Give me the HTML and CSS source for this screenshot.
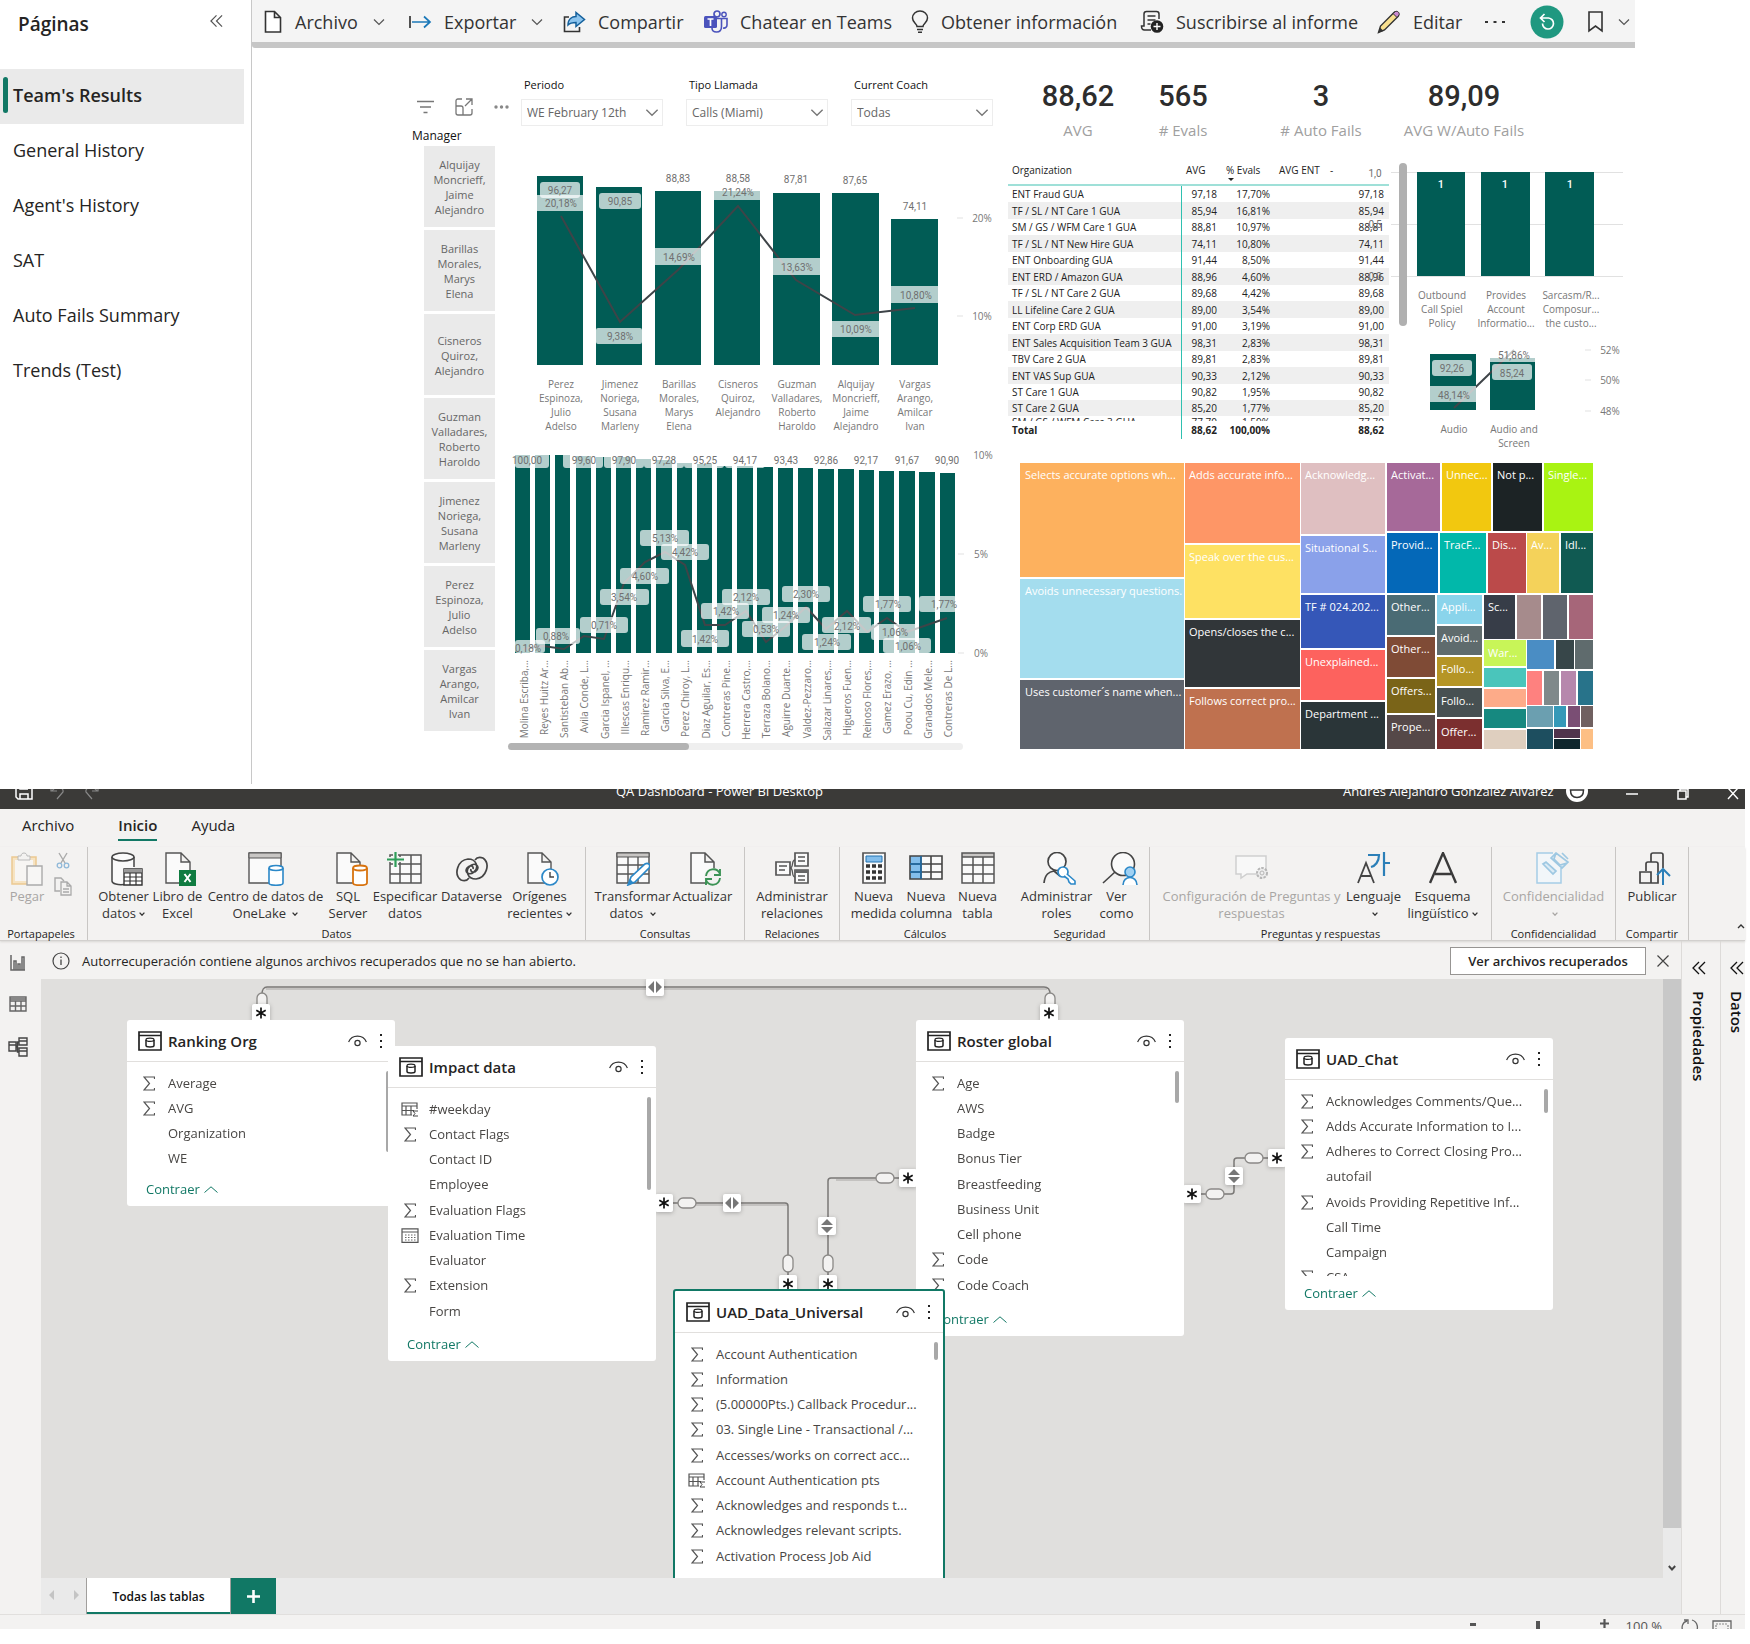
FILE: index.html
```html
<!DOCTYPE html>
<html lang="es">
<head>
<meta charset="utf-8">
<meta name="viewport" content="width=device-width, initial-scale=1">
<title>QA Dashboard - Power BI</title>
<link rel="stylesheet" href="styles.css">
</head>
<body>
<svg class="defs" aria-hidden="true">
  <symbol id="chev" viewBox="0 0 12 8"><path d="M1 1.500l5 5 5-5" fill="none" stroke="currentColor" stroke-width="1.200"/></symbol>
  <symbol id="ddown" viewBox="0 0 6 4"><path d="M.6.6L3 3.200 5.400.6" fill="none" stroke="currentColor" stroke-width="1.300"/></symbol>
  <symbol id="dchev" viewBox="0 0 14 14"><path d="M7 1L1 7l6 6M13 1L7 7l6 6" fill="none" stroke="currentColor" stroke-width="1.300"/></symbol>
  <symbol id="sigma" viewBox="0 0 12 15"><path d="M11.500 3V1H1l5.500 6.500L1 14h10.500v-2" fill="none" stroke="#555" stroke-width="1.200"/></symbol>
  <symbol id="calc" viewBox="0 0 18 15"><path d="M16 7V1H1v12h10M1 4h15M5 4v9M10 4v9M1 8.500h12" fill="none" stroke="#555" stroke-width="1.200"/><path d="M17 9h-5l2 2.500-2 2.500h5" fill="none" stroke="#444"/></symbol>
  <symbol id="cal" viewBox="0 0 18 15"><path d="M1 .8h16v13.500H1zM1 4h16" fill="none" stroke="#555" stroke-width="1.200"/><path d="M4 7h10.500M4 9.500h10.500M4 12h10.500" stroke="#666" stroke-width="1.200" stroke-dasharray="1.500 1.500"/></symbol>
  <symbol id="tbl" viewBox="0 0 24 20"><path d="M1 1h22v18H1zM1 4.500h22" fill="none" stroke="#222" stroke-width="1.700"/><path d="M8 9v5.500c0 2 8 2 8 0V9" fill="none" stroke="#222" stroke-width="1.500"/><ellipse cx="12" cy="8.800" rx="4" ry="1.600" fill="none" stroke="#222" stroke-width="1.300"/></symbol>
  <symbol id="eye" viewBox="0 0 19 12"><path d="M.6 7C4-.8 15-.8 18.400 7" fill="none" stroke="#333" stroke-width="1.200"/><circle cx="9.500" cy="8" r="2.600" fill="none" stroke="#333" stroke-width="1.200"/></symbol>
  <symbol id="kebab" viewBox="0 0 4 16"><path d="M1 1h2v2H1zM1 7h2v2H1zM1 13h2v2H1z" fill="#222"/></symbol>
  <symbol id="up" viewBox="0 0 14 7"><path d="M.5 6.500L7 .8l6.500 5.700" fill="none" stroke="#117865"/></symbol>
  <symbol id="star" viewBox="0 0 18 18"><rect width="18" height="18" rx="2" fill="#fff"/><path d="M9 3.500v11M4.300 6.200l9.400 5.600M13.700 6.200l-9.400 5.600" stroke="#111" stroke-width="1.700"/></symbol>
  <symbol id="lr" viewBox="0 0 18 18"><rect width="18" height="18" rx="2" fill="#fff"/><path d="M8 3v12L2 9zM10 3v12l6-6z" fill="#777"/></symbol>
  <symbol id="ud" viewBox="0 0 18 18"><rect width="18" height="18" rx="2" fill="#fff"/><path d="M3 8h12L9 2zM3 10h12l-6 6z" fill="#777"/></symbol>
</svg>

<section class="service">
  <nav class="pages" aria-label="Páginas">
    <div class="pages-head"><h2>Páginas</h2><button class="bare" aria-label="Contraer"><svg width="13" height="14"><use href="#dchev"/></svg></button></div>
    <a class="page active" href="#">Team's Results</a>
    <a class="page" href="#">General History</a>
    <a class="page" href="#">Agent's History</a>
    <a class="page" href="#">SAT</a>
    <a class="page" href="#">Auto Fails Summary</a>
    <a class="page" href="#">Trends (Test)</a>
  </nav>

  <div class="report">
    <div class="toolbar">
      <button><svg width="19" height="24" viewBox="0 0 19 24"><path d="M1.500 1.500h9l6 6V22h-15zM10.500 1.500v6h6" fill="#fff" stroke="#333" stroke-width="1.600"/></svg><span>Archivo</span><svg class="caret" width="12" height="8"><use href="#chev"/></svg></button>
      <button><svg width="23" height="16" viewBox="0 0 23 16"><path d="M1 2v12" stroke="#333" stroke-width="1.700"/><path d="M3 8h18M15 2.500L21 8l-6 5.500" fill="none" stroke="#1b78b8" stroke-width="1.700"/></svg><span>Exportar</span><svg class="caret" width="12" height="8"><use href="#chev"/></svg></button>
      <button><svg width="23" height="22" viewBox="0 0 23 22"><path d="M6 6H1.500v14.500h15V16" fill="none" stroke="#333" stroke-width="1.600"/><path d="M5 14c0-6 4-8.500 8-8.500V1.500l8.500 7-8.500 7v-4c-4 0-6 .5-8 2.500z" fill="#8cc4ee" stroke="#14609c" stroke-width="1.500"/></svg><span>Compartir</span></button>
      <button><svg width="24" height="24" viewBox="0 0 24 24"><circle cx="13" cy="4" r="3" fill="none" stroke="#4b53bc" stroke-width="1.700"/><circle cx="20" cy="4.500" r="2.200" fill="none" stroke="#4b53bc" stroke-width="1.400"/><path d="M17 8.500h6v6.500c0 2-1.500 3.500-4 3M9 8.500h8.500v8c0 3.500-2 5.500-5 5.500S8 20.500 8 18" fill="none" stroke="#4b53bc" stroke-width="1.600"/><rect y="6" width="13" height="12" rx="1.500" fill="#4b53bc"/><path d="M3.500 9h6M6.500 9v7" stroke="#fff" stroke-width="1.700"/></svg><span>Chatear en Teams</span></button>
      <button><svg width="18" height="24" viewBox="0 0 18 24"><path d="M6 16.500c0-3-4.500-4-4.500-8.500a7.500 7 0 0 1 15 0c0 4.500-4.500 5.500-4.500 8.500zM6 19.500h6M7 22.300h4" fill="none" stroke="#333" stroke-width="1.500"/></svg><span>Obtener información</span></button>
      <button><svg width="24" height="24" viewBox="0 0 24 24"><path d="M19 9V4c0-1.500-1-2.500-2.500-2.500h-10C5 1.500 4 2.500 4 4v12H1.500c0 3 1 4 3 4H11M7.500 6h8M7.500 10h8M7.500 14h3" fill="none" stroke="#333" stroke-width="1.500"/><circle cx="17" cy="16.500" r="6.300" fill="#222"/><path d="M17 13v7M13.500 16.500h7" stroke="#fff" stroke-width="1.400"/></svg><span>Suscribirse al informe</span></button>
      <button><svg width="24" height="24" viewBox="0 0 24 24"><path d="M1.500 22.500L3.500 16 17 2.500c2-2 6 1.500 4 4L7.500 20z" fill="#f8df8e" stroke="#333" stroke-width="1.400"/><path d="M16 3.500L18.500 1.500c2-1 4.500 1.500 3.500 3.500L20 7.500z" fill="#c989cf" stroke="#333"/><path d="M1.500 22.500l1.500-5 3.500 3.500z" fill="#333"/></svg><span>Editar</span></button>
      <button aria-label="Más"><svg width="20" height="4" viewBox="0 0 20 4"><path d="M0 1h3v2H0zM8.500 1h3v2h-3zM17 1h3v2h-3z" fill="#333"/></svg></button>
      <button aria-label="Restablecer"><svg width="34" height="34" viewBox="0 0 34 34"><circle cx="17" cy="17" r="16.500" fill="#1f9880"/><path d="M11 13h7.500a5.500 5.500 0 1 1-6 5.500M14.500 9l-4 4 4 4" fill="none" stroke="#fff" stroke-width="1.700"/></svg></button>
      <button aria-label="Marcadores"><svg width="15" height="22" viewBox="0 0 15 22"><path d="M1 1h13v19l-6.500-5L1 20z" fill="none" stroke="#333" stroke-width="1.600"/></svg><svg class="caret" width="12" height="8"><use href="#chev"/></svg></button>
    </div>

    <div class="board">
      <div class="managers">
        <div class="visual-tools">
          <svg width="17" height="14" viewBox="0 0 17 14"><path d="M0 1.500h17M3 7h11M6.500 12.500h4" stroke="#777" stroke-width="1.500"/></svg>
          <svg width="18" height="18" viewBox="0 0 18 18"><path d="M7 1H3C1.500 1 1 2 1 3v12c0 1.500 1 2 2 2h12c1.500 0 2-1 2-2v-4M1 8h5c1.500 0 2 .7 2 2v7M11 1h6v6M17 1l-7 7" fill="none" stroke="#777" stroke-width="1.300"/></svg>
          <svg width="15" height="4" viewBox="0 0 15 4"><circle cx="2" cy="2" r="1.700" fill="#888"/><circle cx="7.500" cy="2" r="1.700" fill="#888"/><circle cx="13" cy="2" r="1.700" fill="#888"/></svg>
        </div>
        <h3>Manager</h3>
        <button>Alquijay<br>Moncrieff,<br>Jaime<br>Alejandro</button>
        <button>Barillas<br>Morales,<br>Marys<br>Elena</button>
        <button>Cisneros<br>Quiroz,<br>Alejandro</button>
        <button>Guzman<br>Valladares,<br>Roberto<br>Haroldo</button>
        <button>Jimenez<br>Noriega,<br>Susana<br>Marleny</button>
        <button>Perez<br>Espinoza,<br>Julio<br>Adelso</button>
        <button>Vargas<br>Arango,<br>Amilcar<br>Ivan</button>
      </div>

      <div class="middle">
        <div class="filters">
          <div class="filter"><label for="f1">Periodo</label><div class="pick"><select id="f1"><option>WE February 12th</option></select><svg width="14" height="9"><use href="#chev"/></svg></div></div>
          <div class="filter"><label for="f2">Tipo Llamada</label><div class="pick"><select id="f2"><option>Calls (Miami)</option></select><svg width="14" height="9"><use href="#chev"/></svg></div></div>
          <div class="filter"><label for="f3">Current Coach</label><div class="pick"><select id="f3"><option>Todas</option></select><svg width="14" height="9"><use href="#chev"/></svg></div></div>
        </div>
        <svg class="chart" width="496" height="270" viewBox="508 164 496 270">
          <g class="bar"><rect x="537" y="176" width="46" height="189"/><rect x="596" y="187" width="46" height="178"/><rect x="655" y="191" width="46" height="174"/><rect x="714" y="191" width="46" height="174"/><rect x="773" y="193" width="47" height="172"/><rect x="832" y="193" width="47" height="172"/><rect x="891" y="219" width="47" height="146"/></g>
          <polyline class="trend" points="561,216 620,322 679,269 738,206 796,280 855,315 915,308"/>
          <g class="veil"><rect x="540" y="182" width="40" height="16" rx="3"/><rect x="537" y="195" width="46" height="16"/><rect x="599" y="193" width="42" height="16" rx="3"/><rect x="596" y="328" width="46" height="16" rx="2"/><rect x="655" y="248" width="47" height="17"/><rect x="714" y="184" width="46" height="16"/><rect x="773" y="258" width="47" height="17"/><rect x="832" y="321" width="47" height="16"/><rect x="891" y="286" width="47" height="17"/></g>
          <g class="num"><text x="560" y="190">96,27</text><text x="561" y="203">20,18%</text><text x="620" y="201">90,85</text><text x="620" y="336">9,38%</text><text x="678" y="178">88,83</text><text x="679" y="257">14,69%</text><text x="738" y="178">88,58</text><text x="738" y="192">21,24%</text><text x="796" y="179">87,81</text><text x="797" y="267">13,63%</text><text x="855" y="180">87,65</text><text x="856" y="329">10,09%</text><text x="915" y="206">74,11</text><text x="916" y="295">10,80%</text></g>
          <path class="tick" d="M957 218h6M957 316h6"/>
          <g class="cat"><text x="982" y="218">20%</text><text x="982" y="316">10%</text>
            <text x="561" y="384">Perez</text><text x="561" y="398">Espinoza,</text><text x="561" y="412">Julio</text><text x="561" y="426">Adelso</text>
            <text x="620" y="384">Jimenez</text><text x="620" y="398">Noriega,</text><text x="620" y="412">Susana</text><text x="620" y="426">Marleny</text>
            <text x="679" y="384">Barillas</text><text x="679" y="398">Morales,</text><text x="679" y="412">Marys</text><text x="679" y="426">Elena</text>
            <text x="738" y="384">Cisneros</text><text x="738" y="398">Quiroz,</text><text x="738" y="412">Alejandro</text>
            <text x="797" y="384">Guzman</text><text x="797" y="398">Valladares,</text><text x="797" y="412">Roberto</text><text x="797" y="426">Haroldo</text>
            <text x="856" y="384">Alquijay</text><text x="856" y="398">Moncrieff,</text><text x="856" y="412">Jaime</text><text x="856" y="426">Alejandro</text>
            <text x="915" y="384">Vargas</text><text x="915" y="398">Arango,</text><text x="915" y="412">Amilcar</text><text x="915" y="426">Ivan</text></g>
        </svg>
        <svg class="chart" width="496" height="309" viewBox="508 434 496 309">
          <g class="bar"><rect x="515" y="455" width="15" height="198"/><rect x="535" y="455" width="15" height="198"/><rect x="555" y="455" width="15" height="198"/><rect x="576" y="456" width="15" height="197"/><rect x="596" y="457" width="15" height="196"/><rect x="616" y="457" width="15" height="196"/><rect x="636" y="459" width="15" height="194"/><rect x="656" y="460" width="16" height="193"/><rect x="677" y="463" width="15" height="190"/><rect x="697" y="464" width="15" height="189"/><rect x="717" y="466" width="15" height="187"/><rect x="737" y="466" width="16" height="187"/><rect x="757" y="467" width="16" height="186"/><rect x="778" y="468" width="15" height="185"/><rect x="798" y="468" width="15" height="185"/><rect x="818" y="469" width="16" height="184"/><rect x="838" y="469" width="16" height="184"/><rect x="859" y="470" width="15" height="183"/><rect x="879" y="471" width="15" height="182"/><rect x="899" y="471" width="16" height="182"/><rect x="919" y="472" width="16" height="181"/><rect x="940" y="473" width="15" height="180"/></g>
          <polyline class="trend" points="523,649 543,646 564,649 584,636 604,639 624,583 645,562 665,552 685,565 705,625 725,625 746,611 766,642 786,626 806,607 826,629 847,611 867,632 887,618 907,632 927,625 947,618"/>
          <g class="veil"><rect x="515" y="452" width="34" height="16" rx="3"/><rect x="563" y="452" width="40" height="16" rx="3"/><rect x="604" y="452" width="40" height="16" rx="3"/><rect x="644" y="452" width="40" height="16" rx="3"/><rect x="684" y="452" width="40" height="16" rx="3"/><rect x="725" y="452" width="40" height="16" rx="3"/>
          <rect x="515" y="640" width="30" height="13" rx="3"/><rect x="536" y="628" width="44" height="16" rx="3"/><rect x="580" y="617" width="48" height="16" rx="3"/><rect x="600" y="589" width="49" height="16" rx="3"/><rect x="620" y="568" width="49" height="16" rx="3"/><rect x="640" y="530" width="49" height="16" rx="3"/><rect x="661" y="544" width="48" height="16" rx="3"/><rect x="681" y="630" width="48" height="17" rx="3"/><rect x="701" y="603" width="48" height="16" rx="3"/><rect x="722" y="589" width="48" height="16" rx="3"/><rect x="742" y="621" width="48" height="16" rx="3"/><rect x="762" y="607" width="48" height="16" rx="3"/><rect x="782" y="586" width="48" height="16" rx="3"/><rect x="802" y="634" width="49" height="16" rx="3"/><rect x="822" y="617" width="49" height="16" rx="3"/><rect x="863" y="596" width="48" height="16" rx="3"/><rect x="871" y="624" width="48" height="16" rx="3"/><rect x="883" y="638" width="48" height="15" rx="3"/><rect x="919" y="596" width="38" height="16" rx="3"/></g>
          <g class="num"><text x="527" y="460">100,00</text><text x="584" y="460">99,60</text><text x="624" y="460">97,90</text><text x="664" y="460">97,28</text><text x="705" y="460">95,25</text><text x="745" y="460">94,17</text><text x="786" y="460">93,43</text><text x="826" y="460">92,86</text><text x="866" y="460">92,17</text><text x="907" y="460">91,67</text><text x="947" y="460">90,90</text>
          <text x="528" y="648">0,18%</text><text x="556" y="636">0,88%</text><text x="604" y="625">0,71%</text><text x="624" y="597">3,54%</text><text x="645" y="576">4,60%</text><text x="665" y="538">5,13%</text><text x="685" y="552">4,42%</text><text x="705" y="639">1,42%</text><text x="726" y="611">1,42%</text><text x="746" y="597">2,12%</text><text x="766" y="629">0,53%</text><text x="786" y="615">1,24%</text><text x="806" y="594">2,30%</text><text x="827" y="642">1,24%</text><text x="847" y="626">2,12%</text><text x="888" y="604">1,77%</text><text x="895" y="632">1,06%</text><text x="908" y="646">1,06%</text><text x="944" y="604">1,77%</text></g>
          <path class="tick" d="M958 554h6M958 653h6"/>
          <g class="cat"><text x="983" y="455">10%</text><text x="981" y="554">5%</text><text x="981" y="653">0%</text></g>
          <g class="cat side"><text transform="translate(524 660) rotate(-90)">Molina Escriba,...</text><text transform="translate(544 660) rotate(-90)">Reyes Huitz Ar...</text><text transform="translate(564 660) rotate(-90)">Santisteban Ab...</text><text transform="translate(584 660) rotate(-90)">Avila Conde, L...</text><text transform="translate(605 660) rotate(-90)">Garcia Ispanel, ...</text><text transform="translate(625 660) rotate(-90)">Illescas Enriqu...</text><text transform="translate(645 660) rotate(-90)">Ramirez Ramir...</text><text transform="translate(665 660) rotate(-90)">Garcia Silva, E...</text><text transform="translate(685 660) rotate(-90)">Perez Chiroy, L...</text><text transform="translate(706 660) rotate(-90)">Diaz Aguilar, Es...</text><text transform="translate(726 660) rotate(-90)">Contreras Pine...</text><text transform="translate(746 660) rotate(-90)">Herrera Castro,...</text><text transform="translate(766 660) rotate(-90)">Terraza Bolano...</text><text transform="translate(786 660) rotate(-90)">Aguirre Duarte...</text><text transform="translate(807 660) rotate(-90)">Valdez-Pezzaro...</text><text transform="translate(827 660) rotate(-90)">Salazar Linares,...</text><text transform="translate(847 660) rotate(-90)">Higueros Fuen...</text><text transform="translate(867 660) rotate(-90)">Reinoso Flores,...</text><text transform="translate(887 660) rotate(-90)">Gamez Erazo, ...</text><text transform="translate(908 660) rotate(-90)">Poou Cu, Edin ...</text><text transform="translate(928 660) rotate(-90)">Granados Mele...</text><text transform="translate(948 660) rotate(-90)">Contreras De L...</text></g>
        </svg>
        <div class="hscroll"><div class="hthumb"></div></div>
      </div>

      <div class="right">
        <div class="kpis">
          <div><b>88,62</b><span>AVG</span></div>
          <div><b>565</b><span># Evals</span></div>
          <div><b>3</b><span># Auto Fails</span></div>
          <div><b>89,09</b><span>AVG W/Auto Fails</span></div>
        </div>
        <div class="detail">
          <div class="org">
            <table>
              <colgroup><col class="c1"><col class="c2"><col class="c3"><col class="c4"><col class="c5"></colgroup>
              <thead><tr><th>Organization</th><th>AVG</th><th class="sorted">% Evals</th><th>AVG ENT</th><th>-</th></tr></thead>
              <tbody>
                <tr><td>ENT Fraud GUA</td><td>97,18</td><td>17,70%</td><td></td><td>97,18</td></tr>
                <tr><td>TF / SL / NT Care 1 GUA</td><td>85,94</td><td>16,81%</td><td></td><td>85,94</td></tr>
                <tr><td>SM / GS / WFM Care 1 GUA</td><td>88,81</td><td>10,97%</td><td></td><td>88,81</td></tr>
                <tr><td>TF / SL / NT New Hire GUA</td><td>74,11</td><td>10,80%</td><td></td><td>74,11</td></tr>
                <tr><td>ENT Onboarding GUA</td><td>91,44</td><td>8,50%</td><td></td><td>91,44</td></tr>
                <tr><td>ENT ERD / Amazon GUA</td><td>88,96</td><td>4,60%</td><td></td><td>88,96</td></tr>
                <tr><td>TF / SL / NT Care 2 GUA</td><td>89,68</td><td>4,42%</td><td></td><td>89,68</td></tr>
                <tr><td>LL Lifeline Care 2 GUA</td><td>89,00</td><td>3,54%</td><td></td><td>89,00</td></tr>
                <tr><td>ENT Corp ERD GUA</td><td>91,00</td><td>3,19%</td><td></td><td>91,00</td></tr>
                <tr><td>ENT Sales Acquisition Team 3 GUA</td><td>98,31</td><td>2,83%</td><td></td><td>98,31</td></tr>
                <tr><td>TBV Care 2 GUA</td><td>89,81</td><td>2,83%</td><td></td><td>89,81</td></tr>
                <tr><td>ENT VAS Sup GUA</td><td>90,33</td><td>2,12%</td><td></td><td>90,33</td></tr>
                <tr><td>ST Care 1 GUA</td><td>90,82</td><td>1,95%</td><td></td><td>90,82</td></tr>
                <tr><td>ST Care 2 GUA</td><td>85,20</td><td>1,77%</td><td></td><td>85,20</td></tr>
                <tr class="cut"><td><div>SM / GS / WFM Care 3 GUA</div></td><td><div>77,70</div></td><td><div>1,59%</div></td><td></td><td><div>77,70</div></td></tr>
              </tbody>
              <tfoot><tr><td>Total</td><td>88,62</td><td>100,00%</td><td></td><td>88,62</td></tr></tfoot>
            </table>
          </div>
          <svg class="chart fails" width="268" height="295" viewBox="1362 160 268 295">
            <path class="grid" d="M1391 172.500h232M1391 224.500h232M1391 276.500h232"/>
            <rect x="1399" y="163" width="8" height="163" rx="4" fill="#b0b0b0"/>
            <g class="bar"><rect x="1417" y="172" width="48" height="104"/><rect x="1481" y="172" width="49" height="104"/><rect x="1545" y="172" width="49" height="104"/>
            <rect x="1430" y="354" width="46" height="56"/><rect x="1490" y="358" width="45" height="52"/></g>
            <g class="one"><text x="1441" y="184">1</text><text x="1505" y="184">1</text><text x="1570" y="184">1</text></g>
            <polyline class="trend" points="1454,408 1514,350"/>
            <g class="veil"><rect x="1432" y="360" width="40" height="16" rx="3"/><rect x="1430" y="386" width="46" height="16"/><rect x="1490" y="346" width="45" height="16"/><rect x="1492" y="364" width="40" height="16" rx="3"/></g>
            <g class="num"><text x="1375" y="173">1,0</text><text x="1375" y="224">0,5</text><text x="1375" y="276">0,0</text><text x="1452" y="368">92,26</text><text x="1454" y="395">48,14%</text><text x="1514" y="355">51,86%</text><text x="1512" y="373">85,24</text></g>
            <path class="tick" d="M1585 350h6M1585 380h6M1585 411h6"/>
            <g class="cat"><text x="1442" y="295">Outbound</text><text x="1442" y="309">Call Spiel</text><text x="1442" y="323">Policy</text><text x="1506" y="295">Provides</text><text x="1506" y="309">Account</text><text x="1506" y="323">Informatio...</text><text x="1571" y="295">Sarcasm/R...</text><text x="1571" y="309">Composur...</text><text x="1571" y="323">the custo...</text>
            <text x="1610" y="350">52%</text><text x="1610" y="380">50%</text><text x="1610" y="411">48%</text><text x="1454" y="429">Audio</text><text x="1514" y="429">Audio and</text><text x="1514" y="443">Screen</text></g>
          </svg>
        </div>
        <svg class="treemap" width="574" height="288" viewBox="0 0 574 288">
          <g>
          <rect x="0" y="1" width="164" height="114" fill="#fdb15e"/><rect x="0" y="117" width="164" height="99" fill="#a4ddee"/><rect x="0" y="218" width="164" height="69" fill="#5f646d"/>
          <rect x="165" y="1" width="115" height="80" fill="#fe9666"/><rect x="165" y="83" width="115" height="73" fill="#fee163"/><rect x="165" y="158" width="115" height="67" fill="#313639"/><rect x="165" y="227" width="115" height="60" fill="#bf714f"/>
          <rect x="281" y="1" width="84" height="71" fill="#dfbfc1"/><rect x="281" y="74" width="84" height="57" fill="#8aa1ea"/><rect x="281" y="133" width="84" height="53" fill="#3557b8"/><rect x="281" y="188" width="84" height="50" fill="#fd625e"/><rect x="281" y="240" width="84" height="47" fill="#2a3538"/>
          <rect x="367" y="1" width="53" height="68" fill="#a66999"/><rect x="422" y="1" width="49" height="68" fill="#f2c80f"/><rect x="473" y="1" width="49" height="68" fill="#1c2325"/><rect x="524" y="1" width="49" height="68" fill="#a9f312"/>
          <rect x="367" y="71" width="51" height="60" fill="#0468b8"/><rect x="420" y="71" width="46" height="60" fill="#01b8aa"/><rect x="468" y="71" width="38" height="60" fill="#bb4a4a"/><rect x="507" y="71" width="32" height="60" fill="#f4d25a"/><rect x="541" y="71" width="32" height="60" fill="#105a52"/>
          <rect x="367" y="133" width="48" height="40" fill="#4a6b74"/><rect x="367" y="175" width="48" height="40" fill="#7f4b36"/><rect x="367" y="217" width="48" height="34" fill="#7a6418"/><rect x="367" y="253" width="48" height="34" fill="#554848"/>
          <rect x="417" y="133" width="45" height="29" fill="#8ad4eb"/><rect x="417" y="164" width="45" height="29" fill="#5f6b6d"/><rect x="417" y="195" width="45" height="29" fill="#b59525"/><rect x="417" y="226" width="45" height="29" fill="#475052"/><rect x="417" y="257" width="45" height="30" fill="#7b2f2f"/>
          <rect x="464" y="133" width="31" height="44" fill="#373d48"/><rect x="497" y="133" width="24" height="44" fill="#a68b8c"/><rect x="523" y="133" width="24" height="44" fill="#5f646d"/><rect x="549" y="133" width="24" height="44" fill="#a66679"/>
          <rect x="464" y="178" width="42" height="26" fill="#c8f558"/><rect x="464" y="206" width="42" height="19" fill="#4ac5bb"/><rect x="464" y="227" width="42" height="18" fill="#fdab89"/><rect x="464" y="247" width="42" height="19" fill="#168980"/><rect x="464" y="268" width="42" height="19" fill="#dfcfbf"/>
          <rect x="507" y="178" width="27" height="29" fill="#4a8dc4"/><rect x="536" y="178" width="18" height="29" fill="#374649"/><rect x="555" y="178" width="18" height="29" fill="#5f6b6d"/>
          <rect x="507" y="209" width="15" height="34" fill="#fe817f"/><rect x="524" y="209" width="15" height="34" fill="#7f898a"/><rect x="541" y="209" width="15" height="34" fill="#b687ac"/><rect x="558" y="209" width="15" height="34" fill="#28738a"/>
          <rect x="507" y="244" width="26" height="21" fill="#6b9fb0"/><rect x="534" y="244" width="12" height="21" fill="#3599b8"/><rect x="548" y="244" width="12" height="21" fill="#7a4e74"/><rect x="561" y="244" width="12" height="21" fill="#706060"/>
          <rect x="507" y="267" width="26" height="20" fill="#1d4e5f"/><rect x="534" y="267" width="26" height="9" fill="#4f334c"/><rect x="534" y="277" width="26" height="10" fill="#0f262d"/><rect x="561" y="267" width="12" height="20" fill="#fdbf84"/>
          </g>
          <g class="tl"><text x="5" y="12">Selects accurate options wh...</text><text x="5" y="128">Avoids unnecessary questions.</text><text x="5" y="229">Uses customer´s name when...</text>
          <text x="169" y="12">Adds accurate info...</text><text x="169" y="94">Speak over the cus...</text><text x="169" y="169">Opens/closes the c...</text><text x="169" y="238">Follows correct pro...</text>
          <text x="285" y="12">Acknowledg...</text><text x="285" y="85">Situational S...</text><text x="285" y="144">TF # 024.202...</text><text x="285" y="199">Unexplained...</text><text x="285" y="251">Department ...</text>
          <text x="371" y="12">Activat...</text><text x="426" y="12">Unnec...</text><text x="477" y="12">Not p...</text><text x="528" y="12">Single...</text>
          <text x="371" y="82">Provid...</text><text x="424" y="82">TracF...</text><text x="472" y="82">Dis...</text><text x="511" y="82">Av...</text><text x="545" y="82">Idl...</text>
          <text x="371" y="144">Other...</text><text x="371" y="186">Other...</text><text x="371" y="228">Offers...</text><text x="371" y="264">Prope...</text>
          <text x="421" y="144">Appli...</text><text x="421" y="175">Avoid...</text><text x="421" y="206">Follo...</text><text x="421" y="238">Follo...</text><text x="421" y="269">Offer...</text><text x="468" y="144">Sc...</text><text x="468" y="190">War...</text></g>
        </svg>
      </div>
    </div>
  </div>
</section>

<section class="desktop">
  <header class="titlebar">
    <div class="quick"><svg width="90" height="20" viewBox="0 0 90 20"><path d="M1 2h16v16H3l-2-2zM5 18v-5h8v5M5 2v6h8" fill="none" stroke="#fff" stroke-width="1.500"/><path d="M36 6v4h6M37 10c4-6 12-4 11 1l-6 7M83 6v4h-6M82 10c-4-6-12-4-11 1l6 7" fill="none" stroke="#888" stroke-width="1.200"/></svg></div>
    <div class="wtitle">QA Dashboard - Power BI Desktop</div>
    <div class="user">Andrés Alejandro González Álvarez</div>
    <svg class="avatar" width="24" height="22" viewBox="0 0 24 22"><circle cx="12" cy="10" r="11" fill="#fff"/><path d="M5.500 9h13c0 6-3 7.500-6.500 7.500S5.500 15 5.500 9z" fill="none" stroke="#333" stroke-width="1.500"/></svg>
    <svg class="winctl" width="114" height="18" viewBox="0 0 114 18"><path d="M1 10h12" stroke="#fff" stroke-width="1.500"/><path d="M53 7h8v8h-8zM55 7V5h8v8h-2" fill="none" stroke="#fff" stroke-width="1.500"/><path d="M103 4l10 11M113 4l-10 11" stroke="#fff" stroke-width="1.400"/></svg>
  </header>
  <nav class="tabs"><a href="#">Archivo</a><a href="#" class="on">Inicio</a><a href="#">Ayuda</a></nav>
  <div class="ribbon">
    <div class="group g-clip">
      <div class="cmds"><button class="off"><svg width="32" height="34" viewBox="0 0 32 34"><path d="M1 5h24v27H1z" fill="#f6e3c2" stroke="#ecc991" stroke-width="1.500"/><path d="M4 8h18v21H4z" fill="#f7f5f3"/><path d="M7 8V4h3c0-4 6-4 6 0h3v4z" fill="#f3f2f1" stroke="#bbb"/><path d="M16 14h15v19H16z" fill="#f7f6f5" stroke="#aaa" stroke-width="1.400"/></svg><span>Pegar</span></button>
      <div class="mini"><button aria-label="Cortar"><svg width="14" height="17" viewBox="0 0 14 17"><path d="M3 1l6 10M11 1L5 11" stroke="#aaa" stroke-width="1.400"/><circle cx="3.500" cy="13.500" r="2.300" fill="none" stroke="#8fb8d8" stroke-width="1.300"/><circle cx="10.500" cy="13.500" r="2.300" fill="none" stroke="#8fb8d8" stroke-width="1.300"/></svg></button><button aria-label="Copiar"><svg width="18" height="19" viewBox="0 0 18 19"><path d="M6 14H1V1h6l3 3" fill="none" stroke="#aaa" stroke-width="1.400"/><path d="M7 5h6l4 4v9H7zM13 5v4h4M9 12h6M9 15h6" fill="none" stroke="#aaa" stroke-width="1.300"/></svg></button></div></div>
      <div class="gname">Portapapeles</div>
    </div>
    <div class="group g-data">
      <div class="cmds">
        <button><svg class="lean" width="32" height="34" viewBox="0 0 32 34"><path d="M1 5v24c0 4 11 3 12 3V16h10V5z" fill="#fafafa" stroke="none"/><path d="M1 5v24c0 3 6 4 12 3.500M23 5v10" fill="none" stroke="#444" stroke-width="1.500"/><ellipse cx="12" cy="5" rx="11" ry="4" fill="#fafafa" stroke="#444" stroke-width="1.500"/><path d="M13 17h18v16H13z" fill="#fff" stroke="#333" stroke-width="1.400"/><path d="M13 17h18v4H13z" fill="#999"/><path d="M13 21h18M13 25h18M13 29h18M19 21v12M25 21v12" stroke="#333" stroke-width="1.200"/></svg><span>Obtener<br>datos<svg class="dd" width="6" height="4"><use href="#ddown"/></svg></span></button>
        <button><svg class="lean" width="32" height="34" viewBox="0 0 32 34"><path d="M1 1h15l9 9v21H1zM16 1v9h9" fill="#fafafa" stroke="#555" stroke-width="1.400"/><rect x="14" y="18" width="17" height="16" fill="#107c41"/><path d="M19.500 22l6 8M25.500 22l-6 8" stroke="#fff" stroke-width="2"/></svg><span>Libro de<br>Excel</span></button>
        <button><svg width="36" height="34" viewBox="0 0 36 34"><path d="M1 1h32v30H1z" fill="#fafafa" stroke="#555" stroke-width="1.400"/><path d="M1 1h32v5H1z" fill="#c8c6c4" stroke="#555"/><path d="M21 16v15c0 3 14 3 14 0V16" fill="#fff" stroke="#2b88c8" stroke-width="1.600"/><ellipse cx="28" cy="16" rx="7" ry="2.500" fill="#fff" stroke="#2b88c8" stroke-width="1.600"/></svg><span>Centro de datos de<br>OneLake <svg class="dd" width="6" height="4"><use href="#ddown"/></svg></span></button>
        <button><svg class="lean" width="32" height="34" viewBox="0 0 32 34"><path d="M1 1h14l9 9v21H1zM15 1v9h9" fill="#fafafa" stroke="#555" stroke-width="1.400"/><path d="M17 16v15c0 3 14 3 14 0V16" fill="#fff" stroke="#d8730f" stroke-width="1.800"/><ellipse cx="24" cy="16" rx="7" ry="2.500" fill="#fff" stroke="#d8730f" stroke-width="1.800"/></svg><span>SQL<br>Server</span></button>
        <button><svg width="36" height="34" viewBox="0 0 36 34"><path d="M3 3h31v28H3z" fill="#fafafa" stroke="#555" stroke-width="1.500"/><path d="M13 3v28M24 3v28M3 12h31M3 22h31" stroke="#555" stroke-width="1.500"/><path d="M0 7.500h17M8.500 0v15" stroke="#f3f2f1" stroke-width="5"/><path d="M0 7.500h17M8.500 0v15" stroke="#2f9e5a" stroke-width="2.200"/></svg><span>Especificar<br>datos</span></button>
        <button><svg width="34" height="34" viewBox="0 0 34 34"><path d="M28 6c8 6 3 20-7 21-9 0-11-9-6-13s10 0 7 4-7 2-6-1M6 28c-8-6-3-20 7-21 9 0 11 9 6 13s-10 0-7-4 7-2 6 1M28 6c-3-1-6-1-8 2M6 28c3 1 6 1 8-2" fill="none" stroke="#444" stroke-width="1.700"/></svg><span>Dataverse</span></button>
        <button><svg class="lean" width="32" height="34" viewBox="0 0 32 34"><path d="M1 1h14l9 9v21H1zM15 1v9h9" fill="#fafafa" stroke="#555" stroke-width="1.400"/><circle cx="23" cy="25" r="8" fill="#fff" stroke="#2b88c8" stroke-width="1.700"/><path d="M23 20v5h4" fill="none" stroke="#444" stroke-width="1.400"/></svg><span>Orígenes<br>recientes<svg class="dd" width="6" height="4"><use href="#ddown"/></svg></span></button>
      </div>
      <div class="gname">Datos</div>
    </div>
    <div class="group g-query">
      <div class="cmds">
        <button><svg width="34" height="34" viewBox="0 0 34 34"><path d="M1 1h32v30H1z" fill="#fafafa" stroke="#555" stroke-width="1.500"/><path d="M1 1h32v4H1z" fill="#c8c6c4" stroke="#555"/><path d="M12 5v26M22 5v26M1 13h32M1 22h32" stroke="#555" stroke-width="1.400"/><path d="M12 33l3-8 14-13c3-2 6 1 4 4L19 30z" fill="#fff" stroke="#2b88c8" stroke-width="1.700"/><path d="M12 33l2-6 4 4z" fill="#2b88c8"/></svg><span>Transformar<br>datos <svg class="dd" width="6" height="4"><use href="#ddown"/></svg></span></button>
        <button><svg class="lean" width="32" height="34" viewBox="0 0 32 34"><path d="M1 1h14l9 9v21H1zM15 1v9h9" fill="#fafafa" stroke="#555" stroke-width="1.500"/><circle cx="23" cy="25" r="9" fill="#f3f2f1"/><path d="M16 24c1-8 11-9 14-2M30 17v6h-6M30 26c-1 8-11 9-14 2M16 33v-6h6" fill="none" stroke="#3c9355" stroke-width="1.900"/></svg><span>Actualizar</span></button>
      </div>
      <div class="gname">Consultas</div>
    </div>
    <div class="group g-rel">
      <div class="cmds"><button><svg width="34" height="34" viewBox="0 0 34 34"><path d="M1 10h14v13H1zM20 1h13v13H20zM20 18h13v13H20z" fill="#fafafa" stroke="#555" stroke-width="1.700"/><path d="M20 18h13v3H20z" fill="#666"/><path d="M15 16c4 0 1-8 5-8M15 16c4 0 1 9 5 9M4 14h8M4 18h6M23 5h7M23 9h7M23 24h7M23 28h7" fill="none" stroke="#555" stroke-width="1.300"/></svg><span>Administrar<br>relaciones</span></button></div>
      <div class="gname">Relaciones</div>
    </div>
    <div class="group g-calc">
      <div class="cmds">
        <button><svg width="24" height="34" viewBox="0 0 24 34"><path d="M1 1h22v30H1z" fill="#fafafa" stroke="#555" stroke-width="1.700"/><path d="M4 4h16v6H4z" fill="#83beec" stroke="#2273b0"/><path d="M4 14h16M4 20h16M4 26h16" stroke="#333" stroke-width="3.500" stroke-dasharray="4 2"/></svg><span>Nueva<br>medida</span></button>
        <button><svg width="34" height="34" viewBox="0 0 34 34"><path d="M1 4h32v23H1z" fill="#fafafa"/><path d="M1 4h11v23H1z" fill="#83beec"/><path d="M1 4h32v23H1zM12 4v23M22 4v23M1 12h32M1 20h32" fill="none" stroke="#444" stroke-width="1.600"/><path d="M1 12h11M1 20h11M12 4v23" stroke="#1b6fb0" stroke-width="1.400"/></svg><span>Nueva<br>columna</span></button>
        <button><svg width="34" height="34" viewBox="0 0 34 34"><path d="M1 1h32v30H1z" fill="#fafafa"/><path d="M1 1h32v4H1z" fill="#c8c6c4"/><path d="M1 1h32v30H1zM1 5h32M12 5v26M22 5v26M1 13h32M1 22h32" fill="none" stroke="#555" stroke-width="1.500"/></svg><span>Nueva<br>tabla</span></button>
      </div>
      <div class="gname">Cálculos</div>
    </div>
    <div class="group g-sec">
      <div class="cmds">
        <button><svg class="lean" width="34" height="34" viewBox="0 0 34 34"><circle cx="14" cy="9.500" r="9" fill="#fafafa" stroke="#444" stroke-width="1.700"/><path d="M1 31c1-9 5-11 10-12l6 5" fill="none" stroke="#444" stroke-width="1.700"/><circle cx="20" cy="20" r="5" fill="#fff" stroke="#2b88c8" stroke-width="1.700"/><path d="M24 22l8 7v3h-4l-2-2-1-3-4-3" fill="#fff" stroke="#2b88c8" stroke-width="1.600"/></svg><span>Administrar<br>roles</span></button>
        <button><svg class="lean" width="36" height="34" viewBox="0 0 36 34"><circle cx="21" cy="12" r="11.500" fill="#fafafa" stroke="#444" stroke-width="1.600"/><path d="M1 31l12-11" stroke="#444" stroke-width="1.600"/><circle cx="28" cy="20" r="5" fill="#9fd0f2" stroke="#2b88c8" stroke-width="1.600"/><path d="M21 33c0-10 14-10 14 0" fill="#fff" stroke="#2b88c8" stroke-width="1.600"/></svg><span>Ver<br>como</span></button>
      </div>
      <div class="gname">Seguridad</div>
    </div>
    <div class="group g-qa">
      <div class="cmds">
        <button class="off"><svg width="34" height="34" viewBox="0 0 34 34"><path d="M1 4h30v18H12l-6 4v-4H1z" fill="#f8f8f8" stroke="#cfcfcf" stroke-width="1.500"/><circle cx="27" cy="21" r="5" fill="#eee" stroke="#b5b5b5" stroke-width="2" stroke-dasharray="2.500 1.200"/><circle cx="27" cy="21" r="2" fill="none" stroke="#b5b5b5"/></svg><span>Configuración de Preguntas y<br>respuestas</span></button>
        <button><svg width="34" height="34" viewBox="0 0 34 34"><path d="M1 31L9 11l8 20M4 24h10" fill="none" stroke="#444" stroke-width="1.800"/><path d="M11 3h11c0 7-4 11-8 12M27 0v24M27 11h6" fill="none" stroke="#2b7fb8" stroke-width="2.200"/></svg><span>Lenguaje<br><svg class="dd" width="6" height="4"><use href="#ddown"/></svg></span></button>
        <button><svg width="28" height="34" viewBox="0 0 28 34"><path d="M1 31L14 1l13 30M6 22h16" fill="none" stroke="#3a3a3a" stroke-width="2.400"/></svg><span>Esquema<br>lingüístico<svg class="dd" width="6" height="4"><use href="#ddown"/></svg></span></button>
      </div>
      <div class="gname">Preguntas y respuestas</div>
    </div>
    <div class="group g-conf">
      <div class="cmds"><button class="off"><svg width="34" height="34" viewBox="0 0 34 34"><path d="M17 1H1v30h24V16" fill="#f2f6f9" stroke="#a5cde6" stroke-width="1.500"/><path d="M7 12l10 10 3-3-10-9zM15 6l5-5 12 9-6 6zM20 1l-2 6 6 6 7-2M26 1l6 6" fill="#dcebf5" stroke="#9ec8e2" stroke-width="1.700"/></svg><span>Confidencialidad<br><svg class="dd" width="6" height="4"><use href="#ddown"/></svg></span></button></div>
      <div class="gname">Confidencialidad</div>
    </div>
    <div class="group g-pub">
      <div class="cmds"><button><svg class="lean" width="32" height="34" viewBox="0 0 32 34"><path d="M12 10V3c0-1 1-2 2-2h8c1 0 2 1 2 2v13M7 19v-7c0-1 1-2 2-2h8c1 0 2 1 2 2v19H1V20h11v11" fill="none" stroke="#444" stroke-width="1.700"/><path d="M24 33V17M18 23l6-6 7 7" fill="none" stroke="#2b7fb8" stroke-width="2"/></svg><span>Publicar</span></button></div>
      <div class="gname">Compartir</div>
    </div>
    <svg class="collapse" width="8" height="6" viewBox="0 0 8 6"><path d="M1 5l3-3 3 3" fill="none" stroke="#333" stroke-width="1.400"/></svg>
  </div>

  <div class="work">
    <nav class="rail" aria-label="Vistas">
      <button aria-label="Informe"><svg width="16" height="16" viewBox="0 0 16 16"><path d="M1 0v15h14M4 15V6h2v9M8 15V9h2v6M12 15V2h2v13" fill="none" stroke="#666" stroke-width="1.500"/></svg></button>
      <button aria-label="Tabla"><svg width="18" height="16" viewBox="0 0 18 16"><path d="M1 1h16v14H1zM1 5h16M1 10h16M6.500 5v10M12 5v10M1 3h16" fill="none" stroke="#666" stroke-width="1.400"/></svg></button>
      <button aria-label="Modelo"><svg width="20" height="20" viewBox="0 0 20 20"><path d="M11 1h8v7h-8zM11 11h8v8h-8zM1 5h7v9H1zM11 4h8M11 14h8M1 8h7M8 9h1.500V5H11M8 10h1.500v5H11" fill="none" stroke="#444" stroke-width="1.400"/></svg></button>
    </nav>
    <div class="stage">
      <div class="notice">
        <svg width="18" height="18" viewBox="0 0 18 18"><circle cx="9" cy="9" r="8" fill="none" stroke="#444" stroke-width="1.200"/><path d="M9 7.500V13M9 4.500V6" stroke="#444" stroke-width="1.300"/></svg>
        <p>Autorrecuperación contiene algunos archivos recuperados que no se han abierto.</p>
        <button class="recover">Ver archivos recuperados</button>
        <button class="bare" aria-label="Cerrar"><svg width="12" height="12" viewBox="0 0 12 12"><path d="M.5.5l11 11M11.500.5l-11 11" stroke="#444" stroke-width="1.200"/></svg></button>
      </div>
      <div class="model">
        <div class="canvas">
          <svg class="links" width="1622" height="598" viewBox="41 979 1622 598">
            <g class="wire shade"><path d="M266 989H1047M696 1205h92M836 1180h40"/></g>
            <g class="wire"><path d="M262 994c0-4 2-7 5-7H1044c4 0 6 3 6 7"/><path d="M670 1203H785q3 0 3 3V1280"/><path d="M900 1178H831q-3 0-3 3V1280"/><path d="M1197 1194h34q3 0 3-3V1161q0-3 3-3h34"/></g>
            <g class="pill"><rect x="257" y="993" width="10" height="16" rx="5"/><rect x="1045" y="993" width="10" height="16" rx="5"/><rect x="678" y="1198" width="18" height="10" rx="5"/><rect x="876" y="1173" width="18" height="10" rx="5"/><rect x="783" y="1255" width="10" height="17" rx="5"/><rect x="823" y="1255" width="10" height="17" rx="5"/><rect x="1206" y="1189" width="18" height="10" rx="5"/><rect x="1245" y="1153" width="18" height="10" rx="5"/></g>
            <g class="badge"><use href="#star" x="252" y="1004" width="18" height="18"/><use href="#star" x="1040" y="1004" width="18" height="18"/><use href="#lr" x="646" y="978" width="18" height="18"/><use href="#star" x="655" y="1194" width="18" height="18"/><use href="#lr" x="723" y="1194" width="18" height="18"/><use href="#star" x="779" y="1275" width="18" height="18"/><use href="#star" x="819" y="1275" width="18" height="18"/><use href="#ud" x="818" y="1217" width="18" height="18"/><use href="#star" x="899" y="1169" width="18" height="18"/><use href="#star" x="1183" y="1185" width="18" height="18"/><use href="#ud" x="1225" y="1167" width="18" height="18"/><use href="#star" x="1268" y="1149" width="18" height="18"/></g>
          </svg>

          <article class="card k-rank">
            <header><svg width="24" height="20"><use href="#tbl"/></svg><h4>Ranking Org</h4><svg width="19" height="12"><use href="#eye"/></svg><svg width="4" height="16"><use href="#kebab"/></svg></header>
            <div class="body"><ul><li><svg width="12" height="15"><use href="#sigma"/></svg>Average</li><li><svg width="12" height="15"><use href="#sigma"/></svg>AVG</li><li>Organization</li><li>WE</li></ul><i class="bar81"></i></div>
            <a class="fold" href="#">Contraer<svg width="14" height="7"><use href="#up"/></svg></a>
          </article>
          <article class="card k-impact">
            <header><svg width="24" height="20"><use href="#tbl"/></svg><h4>Impact data</h4><svg width="19" height="12"><use href="#eye"/></svg><svg width="4" height="16"><use href="#kebab"/></svg></header>
            <div class="body"><ul><li><svg width="18" height="15"><use href="#calc"/></svg>#weekday</li><li><svg width="12" height="15"><use href="#sigma"/></svg>Contact Flags</li><li>Contact ID</li><li>Employee</li><li><svg width="12" height="15"><use href="#sigma"/></svg>Evaluation Flags</li><li><svg width="18" height="15"><use href="#cal"/></svg>Evaluation Time</li><li>Evaluator</li><li><svg width="12" height="15"><use href="#sigma"/></svg>Extension</li><li>Form</li></ul><i class="bar93"></i></div>
            <a class="fold" href="#">Contraer<svg width="14" height="7"><use href="#up"/></svg></a>
          </article>
          <article class="card k-roster">
            <header><svg width="24" height="20"><use href="#tbl"/></svg><h4>Roster global</h4><svg width="19" height="12"><use href="#eye"/></svg><svg width="4" height="16"><use href="#kebab"/></svg></header>
            <div class="body"><ul><li><svg width="12" height="15"><use href="#sigma"/></svg>Age</li><li>AWS</li><li>Badge</li><li>Bonus Tier</li><li>Breastfeeding</li><li>Business Unit</li><li>Cell phone</li><li><svg width="12" height="15"><use href="#sigma"/></svg>Code</li><li><svg width="12" height="15"><use href="#sigma"/></svg>Code Coach</li></ul><i class="bar32"></i></div>
            <a class="fold" href="#">Contraer<svg width="14" height="7"><use href="#up"/></svg></a>
          </article>
          <article class="card k-chat">
            <header><svg width="24" height="20"><use href="#tbl"/></svg><h4>UAD_Chat</h4><svg width="19" height="12"><use href="#eye"/></svg><svg width="4" height="16"><use href="#kebab"/></svg></header>
            <div class="body"><ul><li><svg width="12" height="15"><use href="#sigma"/></svg>Acknowledges Comments/Que...</li><li><svg width="12" height="15"><use href="#sigma"/></svg>Adds Accurate Information to I...</li><li><svg width="12" height="15"><use href="#sigma"/></svg>Adheres to Correct Closing Pro...</li><li>autofail</li><li><svg width="12" height="15"><use href="#sigma"/></svg>Avoids Providing Repetitive Inf...</li><li>Call Time</li><li>Campaign</li><li><svg width="12" height="15"><use href="#sigma"/></svg>CSA</li></ul><i class="bar24"></i></div>
            <a class="fold" href="#">Contraer<svg width="14" height="7"><use href="#up"/></svg></a>
          </article>
          <article class="card k-data">
            <header><svg width="24" height="20"><use href="#tbl"/></svg><h4>UAD_Data_Universal</h4><svg width="19" height="12"><use href="#eye"/></svg><svg width="4" height="16"><use href="#kebab"/></svg></header>
            <div class="body"><ul><li><svg width="12" height="15"><use href="#sigma"/></svg>Account Authentication</li><li><svg width="12" height="15"><use href="#sigma"/></svg>Information</li><li><svg width="12" height="15"><use href="#sigma"/></svg>(5.00000Pts.) Callback Procedur...</li><li><svg width="12" height="15"><use href="#sigma"/></svg>03. Single Line - Transactional /...</li><li><svg width="12" height="15"><use href="#sigma"/></svg>Accesses/works on correct acc...</li><li><svg width="18" height="15"><use href="#calc"/></svg>Account Authentication pts</li><li><svg width="12" height="15"><use href="#sigma"/></svg>Acknowledges and responds t...</li><li><svg width="12" height="15"><use href="#sigma"/></svg>Acknowledges relevant scripts.</li><li><svg width="12" height="15"><use href="#sigma"/></svg>Activation Process Job Aid</li></ul><i class="bar18"></i></div>
          </article>
        </div>
        <div class="vscroll"><div class="vthumb"></div><svg width="8" height="6" viewBox="0 0 8 6"><path d="M.8 1L4 4.500 7.200 1" fill="none" stroke="#444" stroke-width="1.900"/></svg></div>
      </div>
      <div class="sheets">
        <svg width="30" height="12" viewBox="0 0 30 12"><path d="M5 1v10L0 6zM25 1v10l5-5z" fill="#c4c4c4"/></svg>
        <button class="sheet">Todas las tablas</button>
        <button class="add" aria-label="Nueva página"><svg width="13" height="13" viewBox="0 0 13 13"><path d="M0 6.500h13M6.500 0v13" stroke="#fff" stroke-width="2.600"/></svg></button>
      </div>
    </div>
    <button class="pane p1"><svg width="14" height="14"><use href="#dchev"/></svg><span>Propiedades</span></button>
    <button class="pane p2"><svg width="14" height="14"><use href="#dchev"/></svg><span>Datos</span></button>
  </div>
  <footer class="status">
    <svg width="142" height="16" viewBox="0 0 142 16"><path d="M2 9.500h6" stroke="#555" stroke-width="3"/><path d="M70 6v10" stroke="#555" stroke-width="4"/><path d="M132 8.500h9M136.500 4v9" stroke="#555" stroke-width="2.200"/></svg>
    <span>100 %</span>
    <svg width="20" height="18" viewBox="0 0 20 18"><path d="M4 15C0 9 3 4 7 3M4 2h4v4M12 2c6 2 7 9 3 13" fill="none" stroke="#666" stroke-width="1.300"/></svg>
    <svg width="20" height="16" viewBox="0 0 20 16"><path d="M1 1h18v14H1z" fill="none" stroke="#666" stroke-width="1.300"/><path d="M4 5v10M16 5v10M4 4h12" stroke="#888" stroke-width="1.200" stroke-dasharray="2 1"/></svg>
  </footer>
</section>
</body>
</html>
```
FILE: styles.css
```css
* { box-sizing: border-box; }
body { margin: 0; background: #fff; color: #252423; font-family: "Open Sans", "Noto Sans", sans-serif; font-size: 13px; }
button { font: inherit; color: inherit; background: none; border: 0; padding: 0; }
a { color: inherit; text-decoration: none; }
h2, h3, h4, p, ul { margin: 0; padding: 0; }
svg { display: block; flex: none; }
.defs { position: absolute; width: 0; height: 0; }

/* report in the service */
.service { display: flex; min-height: 784px; margin-bottom: 5px; }
.pages { width: 252px; flex: none; border-right: 1px solid #c8c8c8; }
.pages-head { display: flex; justify-content: space-between; align-items: flex-start; height: 69px; padding: 11px 28px 0 18px; }
.pages-head h2 { font-size: 19px; font-weight: 600; line-height: 26px; }
.pages-head .bare { padding-top: 3px; color: #555; }
.page { display: flex; align-items: center; width: 244px; height: 55px; padding: 0 0 4px 13px; font-size: 18px; }
.page.active { position: relative; background: #eaeaea; font-weight: 600; }
.page.active::before { content: ""; position: absolute; left: 3px; top: 8px; width: 5px; height: 36px; border-radius: 3px; background: #117865; }

.report { flex: 1; min-width: 0; margin-right: 115px; }
.toolbar { display: grid; grid-template-columns: 145px 154px 141px 207px 229px 237px 108px 45px 58px 50px; height: 48px; padding: 1px 0 0 12px; background: #f4f4f4; border-bottom: 6px solid #c6c6c6; border-bottom-left-radius: 3px; font-size: 18px; color: #333; }
.toolbar button { display: flex; align-items: center; gap: 12px; white-space: nowrap; }
.toolbar .caret { margin-left: 3px; color: #555; }

.board { display: grid; grid-template-columns: 96px 496px 1fr; padding-left: 160px; }
.visual-tools { display: flex; align-items: center; justify-content: space-between; width: 92px; height: 20px; margin: 49px 0 11px 5px; }
.managers h3 { height: 18px; font-size: 12px; font-weight: 400; line-height: 16px; color: #111; }
.managers button { display: block; width: 71px; height: 81px; margin: 0 0 3px 12px; padding-top: 1px; background: #eaeaea; color: #666; font-size: 11px; line-height: 15px; text-align: center; }

.filters { display: grid; grid-template-columns: repeat(3, 142px); gap: 23px; height: 87px; padding: 0 0 0 13px; margin-top: 29px; }
.filter label { display: block; padding-left: 3px; font-size: 11px; line-height: 16px; color: #111; }
.pick { position: relative; margin-top: 6px; }
.pick select { width: 100%; height: 27px; padding: 0 5px; appearance: none; border: 1px solid #ededed; border-radius: 0; background: #fff; color: #666; font: 12px "Open Sans", sans-serif; }
.pick svg { position: absolute; right: 4px; top: 9px; color: #777; }

.chart { display: block; overflow: hidden; }
.chart text, .tl text { dominant-baseline: central; text-anchor: middle; }
.bar rect { fill: #015c55; }
.trend { fill: none; stroke: #3e4448; stroke-width: 2; }
.veil rect { fill: #fff; fill-opacity: .7; }
.num text { font: 10px Roboto, sans-serif; fill: #707070; }
.cat text { font-size: 10px; fill: #777; }
.chart .side text { text-anchor: end; }
.one text { font: 500 11px Roboto, sans-serif; fill: #fff; }
.tick, .grid { stroke: #e1e1e1; stroke-width: 1; fill: none; }
.hscroll { width: 455px; height: 7px; border-radius: 4px; background: #efefef; }
.hthumb { width: 181px; height: 7px; border-radius: 4px; background: #b3b3b3; }

.right { padding-left: 4px; }
.kpis { display: grid; grid-template-columns: 100px 110px 166px 120px; height: 112px; padding: 30px 0 0 20px; text-align: center; white-space: nowrap; }
.kpis b { display: block; font: 500 29px/36px Roboto, sans-serif; color: #2d2d2d; }
.kpis span { display: block; margin-top: 6px; font-size: 15px; line-height: 20px; color: #a0a0a0; }
.kpis div { display: flex; flex-direction: column; align-items: center; }
.detail { display: flex; height: 295px; }
.org { width: 382px; flex: none; }
.org table { width: 381px; table-layout: fixed; border-collapse: separate; border-spacing: 0; font-size: 10px; color: #222; white-space: nowrap; }
.c1 { width: 174px; } .c2 { width: 40px; } .c3 { width: 53px; } .c4 { width: 51px; } .c5 { width: 63px; }
.org th { height: 26px; padding: 0 0 4px 4px; border-bottom: 2px solid #9fe0d8; font-weight: 400; text-align: left; line-height: 14px; }
.sorted { position: relative; }
.sorted::after { content: ""; position: absolute; left: 6px; bottom: 3px; border: 3px solid transparent; border-top-color: #222; border-bottom: 0; }
.org td { height: 16px; padding: 0 5px 0 0; line-height: 14px; text-align: right; }
.org td:first-child { padding-left: 4px; text-align: left; border-right: 1px solid #2fc0b0; }
.org tbody tr:nth-child(even) td { height: 17px; background: #efefef; }
.org tbody tr:nth-child(14) td { height: 16px; }
.org .cut td div { height: 5px; overflow: hidden; line-height: 13px; }
.org .cut td { height: 5px; line-height: 5px; }
.org tfoot td { height: 18px; font-weight: 700; }
.fails { margin-left: -28px; }
.treemap { margin: 7px 0 0 12px; }
.tl text { font-size: 11px; fill: #fff; text-anchor: start; }

/* desktop window */
.desktop { margin-right: 5px; background: #f3f2f1; }
.titlebar { display: flex; justify-content: flex-end; height: 20px; overflow: hidden; background: #3b3a38; color: #fff; font-size: 13px; line-height: 20px; white-space: nowrap; }
.titlebar > * { margin-top: -8px; }
.quick { padding-left: 15px; width: 616px; }
.wtitle { flex: 1; }
.user { width: 222px; }
.avatar { width: 24px; }
.winctl { margin: -5px 6px 0 36px; }
.tabs { display: flex; gap: 44px; height: 38px; padding: 5px 0 0 22px; font-size: 15px; line-height: 22px; }
.tabs a { height: 27px; }
.tabs .on { font-weight: 600; border-bottom: 2px solid #117865; }
.tabs a:last-child { margin-left: -10px; }
.ribbon { display: flex; height: 94px; border-bottom: 1px solid #d2d0ce; box-shadow: 0 1px 2px #d8d6d4; position: relative; }
.group { display: flex; flex-direction: column; justify-content: space-between; border-right: 1px solid #c8c6c4; }
.cmds { display: grid; justify-content: center; padding-top: 5px; }
.cmds button { display: flex; flex-direction: column; align-items: center; font-size: 13px; line-height: 17px; white-space: nowrap; color: #333; }
.cmds button > span { margin-top: 2px; }
.cmds .off { color: #a8a6a4; }
.cmds .lean { margin-left: 7px; }
.dd { display: inline-block; margin: 0 0 2px 3px; }
.gname { font-size: 11px; line-height: 13px; text-align: center; white-space: nowrap; }
.g-clip { width: 88px; } .g-clip .cmds { grid-template-columns: 46px 26px; justify-content: start; padding-left: 4px; }
.g-clip .gname { padding-right: 5px; }
.mini { display: grid; gap: 8px; align-content: start; }
.g-data { width: 498px; } .g-data .cmds { grid-template-columns: 52px 56px 120px 45px 69px 64px 72px; }
.g-query { width: 159px; } .g-query .cmds { grid-template-columns: 75px 65px; }
.g-rel { width: 95px; }
.g-calc { width: 170px; border: 0; } .g-calc .cmds { grid-template-columns: 49px 56px 47px; }
.g-sec { width: 140px; } .g-sec .cmds { grid-template-columns: 74px 46px; }
.g-qa { width: 342px; } .g-qa .cmds { grid-template-columns: 186px 58px 80px; }
.g-conf { width: 124px; }
.g-pub { width: 73px; }
.collapse { margin: 76px 0 0 auto; }

.work { display: flex; border-bottom: 1px solid #e1dfdd; }
.rail { display: flex; flex-direction: column; align-items: center; gap: 25px; width: 41px; padding: 14px 5px 0 0; }
.stage { flex: 1; min-width: 0; display: flex; flex-direction: column; }
.notice { display: flex; align-items: center; height: 38px; padding: 1px 12px 0 11px; font-size: 13px; }
.notice p { flex: 1; padding-left: 12px; }
.recover { width: 196px; height: 28px; margin-right: 11px; border: 1px solid #979593; background: #fff; font-weight: 600; }
.model { display: flex; height: 599px; }
.canvas { position: relative; flex: 1; overflow: hidden; background: #e0dfdd; }
.links { position: absolute; left: 0; top: 0; }
.wire path { fill: none; stroke: #7a7876; stroke-width: 1.500; }
.shade path { stroke: #c4c2c0; stroke-width: 2; }
.pill rect { fill: #f3f2f1; stroke: #8a8886; stroke-width: 1.300; }
.badge { filter: drop-shadow(0 1px 2px rgba(0, 0, 0, .25)); }
.card { position: absolute; display: flex; flex-direction: column; width: 268px; border-radius: 3px; background: #fff; }
.card header { display: flex; align-items: center; flex: none; height: 42px; padding: 1px 12px 0 11px; border-bottom: 1px solid #e1dfdd; }
.card h4 { flex: 1; padding-left: 6px; font-size: 15px; font-weight: 600; white-space: nowrap; }
.card header svg:last-child { margin-left: 12px; }
.body { position: relative; flex: 1; min-height: 0; padding-top: 9px; overflow: hidden; }
.body ul { list-style: none; }
.body li { position: relative; height: 25px; padding-left: 41px; font-size: 13px; line-height: 25px; color: #484644; white-space: nowrap; }
.body li:nth-child(4n) { height: 26px; }
.body li svg { position: absolute; left: 16px; top: 5px; }
.body li svg[width="18"] { left: 13px; }
.body i { position: absolute; right: 5px; top: 9px; width: 4px; border-radius: 2px; background: #a8a8a8; }
.bar81 { height: 81px; } .bar93 { height: 93px; } .bar32 { height: 32px; } .bar24 { height: 24px; } .bar18 { height: 18px; }
.fold { display: flex; align-items: center; gap: 4px; flex: none; height: 34px; padding-left: 19px; font-size: 13px; color: #117865; }
.k-rank { left: 86px; top: 41px; height: 186px; }
.k-impact { left: 347px; top: 67px; height: 315px; }
.k-roster { left: 875px; top: 41px; height: 316px; }
.k-chat { left: 1244px; top: 59px; height: 272px; }
.k-data { left: 632px; top: 310px; width: 272px; height: 320px; border: 2px solid #117865; }
.vscroll { display: flex; flex-direction: column; justify-content: space-between; align-items: center; width: 18px; padding-bottom: 7px; background: #eaeaea; }
.vthumb { width: 18px; height: 549px; background: #c8c8c8; }
.sheets { display: flex; align-items: stretch; height: 36px; padding-left: 8px; background: #eaeaea; }
.sheets > svg { margin: 11px 7px 0 0; }
.sheet { width: 145px; border: 1px solid #a19f9d; border-width: 0 1px 0 1px; background: #fff; box-shadow: inset 0 -2px #117865; font-size: 12px; font-weight: 600; color: #111; }
.add { display: flex; align-items: center; justify-content: center; width: 45px; background: #117865; }
.pane { display: flex; flex-direction: column; align-items: center; gap: 16px; flex: none; padding: 20px 4px 0 0; border-left: 1px solid #dddbd9; font-size: 15px; font-weight: 600; color: #111; }
.pane span { writing-mode: vertical-rl; line-height: 20px; }
.p1 { width: 39px; }
.p2 { width: 25px; padding: 20px 0 0 8px; overflow: hidden; }
.status { display: flex; justify-content: flex-end; height: 14px; padding-right: 13px; overflow: hidden; font-size: 13px; line-height: 22px; color: #555; }
.status span { margin: 0 18px 0 16px; }
.status svg:last-child { margin: 5px 0 0 12px; }
.status svg:nth-child(3) { margin-top: 3px; }
```
